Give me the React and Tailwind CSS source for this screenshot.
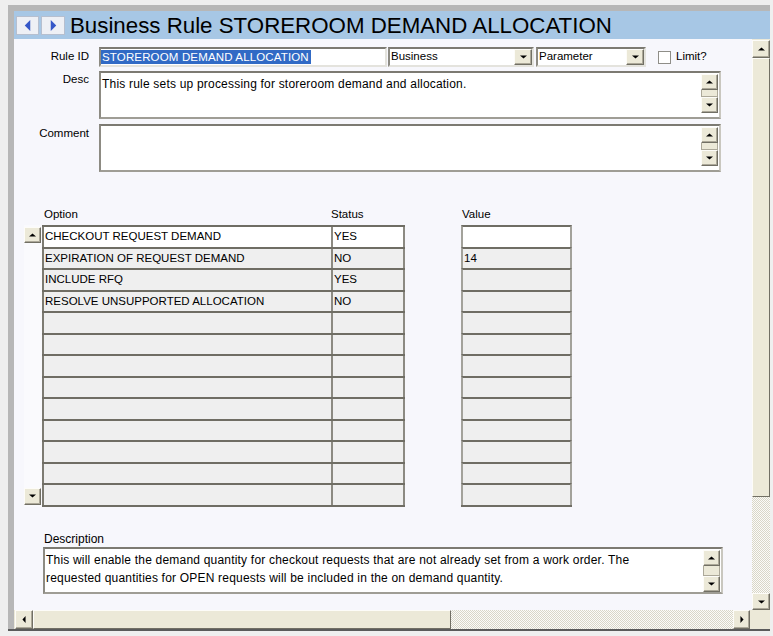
import React from "react";

const options = [
  { option: "CHECKOUT REQUEST DEMAND", status: "YES", value: "" },
  { option: "EXPIRATION OF REQUEST DEMAND", status: "NO", value: "14" },
  { option: "INCLUDE RFQ", status: "YES", value: "" },
  { option: "RESOLVE UNSUPPORTED ALLOCATION", status: "NO", value: "" },
  ...Array.from({ length: 9 }, () => ({ option: "", status: "", value: "" })),
];

const Arrow = ({ dir = "up", color = "#000", w = 7, h = 4 }) => {
  const pts = {
    up: "0,4 7,4 3.5,0.5",
    down: "0,0.5 7,0.5 3.5,4",
    left: "4,0 4,7 0.5,3.5",
    right: "0.5,0 0.5,7 4,3.5",
  }[dir];
  const vert = dir === "up" || dir === "down";
  return (
    <svg width={w} height={h} viewBox={vert ? "0 0 7 4.5" : "0 0 4.5 7"} preserveAspectRatio="none">
      <polygon points={pts} fill={color} />
    </svg>
  );
};

// classic raised scroll button
const ScrollBtn = ({ dir, className = "" }) => {
  const vert = dir === "up" || dir === "down";
  return (
    <div
      className={`flex items-center justify-center bg-[#ece9d8] border border-t-[#fdfcf8] border-l-[#fdfcf8] border-r-[#716f64] border-b-[#716f64] shadow-[inset_-1px_-1px_0_#aca899] ${className}`}
    >
      <Arrow dir={dir} w={vert ? 7 : 4} h={vert ? 4 : 7} />
    </div>
  );
};

const Checker =
  "bg-[image:repeating-conic-gradient(#d9d6c8_0%_25%,#fbfbf8_0%_50%)] bg-[length:2px_2px]";

const TextBox = ({ children, className = "", thumb = 7 }) => (
  <div
    className={`flex bg-white border-2 border-t-[#7c7a72] border-l-[#8d8b83] border-r-[#c9c7bf] border-b-[#9f9d95] ${className}`}
  >
    <div className="flex-1 pl-[1px] pt-[2px] leading-[18px] text-[12px] tracking-[0.2px]">{children}</div>
    <div className="w-[17px] mr-[1px] mt-[1px] flex flex-col">
      <ScrollBtn dir="up" className="h-[16px]" />
      <div
        className="bg-[#ece9d8] border-x border-b border-[#aca899]"
        style={{ height: thumb }}
      />
      <ScrollBtn dir="down" className="h-[16px]" />
    </div>
  </div>
);

const Select = ({ label, className = "" }) => (
  <div
    className={`h-[20px] flex items-center bg-white border-2 border-t-[#7c7a72] border-l-[#8d8b83] border-r-[#e4e3dd] border-b-[#e4e3dd] ${className}`}
  >
    <span className="flex-1 pl-[1px]">{label}</span>
    <ScrollBtn dir="down" className="w-[18px] h-[16px]" />
  </div>
);

export default function App() {
  return (
    <div className="w-[773px] h-[636px] overflow-hidden bg-[#efefef] pl-[8px] pt-[5px] font-['Liberation_Sans',Arial,sans-serif] text-[11.5px] text-black">
      <div className="w-[762px] h-[626px] bg-[#b7b7b7] pl-[6px] pt-[6px] flex flex-col border-b-2 border-[#5b5b5b]">
        {/* title bar */}
        <div className="h-[28px] shrink-0 bg-[#a7c7e5] flex items-center pl-[2px]">
          <div className="w-[23px] h-[19px] flex items-center justify-center bg-[#eef0f5] border border-[#b6bfcf]">
            <Arrow dir="left" color="#3557c8" w={7} h={11} />
          </div>
          <div className="ml-[2px] w-[24px] h-[19px] flex items-center justify-center bg-[#eef0f5] border border-[#b6bfcf]">
            <Arrow dir="right" color="#3557c8" w={7} h={11} />
          </div>
          <h1 className="ml-[5px] text-[22.3px] leading-[28px] pt-[2px] whitespace-nowrap">
            Business Rule STOREROOM DEMAND ALLOCATION
          </h1>
        </div>

        <div className="flex-1 flex min-h-0">
          {/* form body */}
          <div className="flex-1 bg-[#f7f7fc] flex flex-col">
            <div className="mt-[8px] flex items-center">
              <label className="w-[75px] text-right">Rule ID</label>
              <div className="ml-[10px] w-[288px] h-[20px] flex items-center bg-white border-2 border-t-[#7c7a72] border-l-[#8d8b83] border-r-[#e4e3dd] border-b-[#e4e3dd]">
                <span className="bg-[#316ac5] text-white leading-[14px] pl-[1px] pr-[2px] tracking-[0.15px]">
                  STOREROOM DEMAND ALLOCATION
                </span>
              </div>
              <Select label="Business" className="ml-[1px] w-[146px]" />
              <Select label="Parameter" className="ml-[2px] w-[110px]" />
              <div className="ml-[12px] w-[13px] h-[13px] bg-white border border-[#8f8e88]" />
              <span className="ml-[5px]">Limit?</span>
            </div>

            <div className="mt-[4px] flex items-start">
              <label className="w-[75px] text-right pt-[0px]">Desc</label>
              <TextBox className="ml-[10px] w-[622px] h-[48px]">
                This rule sets up processing for storeroom demand and allocation.
              </TextBox>
            </div>

            <div className="mt-[5px] flex items-start">
              <label className="w-[75px] text-right pt-[1px]">Comment</label>
              <TextBox className="ml-[10px] w-[622px] h-[48px]" />
            </div>

            {/* option grid */}
            <div className="mt-[35px] flex h-[14px] leading-[14px]">
              <span className="ml-[30px] w-[287px]">Option</span>
              <span className="w-[131px]">Status</span>
              <span>Value</span>
            </div>
            <div className="mt-[4px] ml-[10px] flex">
              <div className="w-[18px] flex flex-col justify-between bg-[#fafafd] pt-[2px] pb-[2px]">
                <ScrollBtn dir="up" className="h-[16px] w-[17px]" />
                <ScrollBtn dir="down" className="h-[17px] w-[17px]" />
              </div>
              <div className="w-[363px] flex flex-col border-b-2 border-[#6f6d64]">
                {options.map((r, i) => (
                  <div
                    key={i}
                    className={`h-[21.5px] flex border-t-2 border-[#6f6d64] ${i === 0 ? "bg-white" : "bg-[#efefef]"}`}
                  >
                    <div className="w-[289px] flex items-center pl-[1px] border-l-2 border-l-[#7d7b72]">
                      {r.option}
                    </div>
                    <div className="flex-1 flex items-center pl-[1px] border-x-2 border-x-[#8c8a82]">
                      {r.status}
                    </div>
                  </div>
                ))}
              </div>
              <div className="ml-[56px] w-[111px] flex flex-col border-b-2 border-[#6f6d64]">
                {options.map((r, i) => (
                  <div
                    key={i}
                    className={`h-[21.5px] flex items-center pl-[1px] border-t-2 border-t-[#6f6d64] border-x-2 border-x-[#a3a29b] ${i === 0 ? "bg-white" : "bg-[#efefef]"}`}
                  >
                    {r.value}
                  </div>
                ))}
              </div>
            </div>

            <div className="mt-[25px] ml-[30px] h-[14px] leading-[14px] text-[12px]">Description</div>
            <TextBox className="mt-[1px] ml-[29px] w-[680px] h-[47px]" thumb={10}>
              This will enable the demand quantity for checkout requests that are not already set from a work order. The
              <br />
              requested quantities for OPEN requests will be included in the on demand quantity.
            </TextBox>
          </div>

          {/* vertical scrollbar */}
          <div className="w-[18px] flex flex-col bg-[#ece9d8] pt-[1px]">
            <ScrollBtn dir="up" className="h-[18px]" />
            <div className="h-[439px] bg-[#ece9d8] border border-t-[#fdfcf8] border-l-[#fdfcf8] border-r-[#716f64] border-b-[#716f64]" />
            <div className={`flex-1 ${Checker}`} />
            <ScrollBtn dir="down" className="h-[17px]" />
          </div>
        </div>

        {/* horizontal scrollbar */}
        <div className="h-[19px] shrink-0 flex bg-[#ece9d8]">
          <ScrollBtn dir="left" className="ml-[1px] w-[18px]" />
          <div className="w-[418px] bg-[#ece9d8] border border-t-[#fdfcf8] border-l-[#fdfcf8] border-r-[#716f64] border-b-[#716f64]" />
          <div className={`flex-1 ${Checker}`} />
          <ScrollBtn dir="right" className="w-[17px]" />
          <div className="w-[20px] bg-[#ece9d8]" />
        </div>
      </div>
    </div>
  );
}
